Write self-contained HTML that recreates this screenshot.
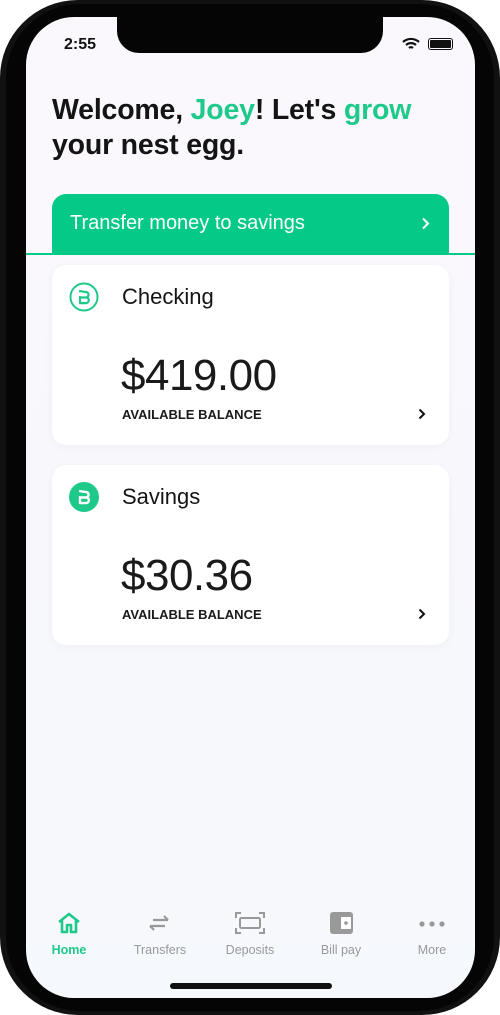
<!DOCTYPE html>
<html><head><meta charset="utf-8"><style>
*{margin:0;padding:0;box-sizing:border-box}
body{width:500px;height:1015px;background:#fff;font-family:"Liberation Sans",sans-serif;position:relative;overflow:hidden}
.phone{position:absolute;left:0;top:0;width:500px;height:1015px;background:#111;border-radius:78px}
.phone2{position:absolute;left:6px;top:4px;width:488px;height:1007px;background:#050505;border-radius:74px}
.screen{position:absolute;left:26px;top:17px;width:449px;height:981px;border-radius:48px;background:linear-gradient(#fbf8fd,#f5f8fc);overflow:hidden}
.notch{position:absolute;left:91px;top:0;width:266px;height:36px;background:#050505;border-radius:0 0 22px 22px}
.abs{position:absolute}
.h1{left:26px;top:76px;font-size:28.5px;font-weight:bold;line-height:35px;color:#141414;letter-spacing:-0.2px}
.g{color:#1ec98a}
.banner{left:26px;top:177px;width:397px;height:60px;background:#04c987;border-radius:14px 14px 0 0;color:#fff;font-size:20px;padding:18px 0 0 18px}
.line{left:0;top:236px;width:449px;height:2px;background:#04c987}
.card{left:26px;width:397px;height:180px;background:#fff;border-radius:14px;box-shadow:0 2px 10px rgba(0,0,0,0.04)}
.title{position:absolute;left:70px;top:19px;font-size:22px;color:#141414}
.amt{position:absolute;left:69px;top:86px;font-size:44px;color:#1a1a1a;letter-spacing:-0.5px}
.lbl{position:absolute;left:70px;top:142px;font-size:13px;font-weight:bold;color:#1a1a1a}
.chev{position:absolute;left:366px;top:143px}
.nav{top:893px;width:90px;text-align:center;font-size:12.5px;color:#999}
</style></head><body>
<div class="phone"></div><div class="phone2"></div>
<div class="screen">
<div class="notch"></div>
<div class="abs" style="left:38px;top:19px;font-size:16px;font-weight:bold;color:#111">2:55</div>
<svg class="abs" style="left:376px;top:20px" width="18" height="14" viewBox="0 0 18 14"><path d="M1 5a12 12 0 0 1 16 0M4 8a7.5 7.5 0 0 1 10 0M7 11a3 3 0 0 1 4 0" stroke="#111" stroke-width="2.2" fill="none"/></svg>
<div class="abs" style="left:402px;top:21px;width:25px;height:12px;border:1.5px solid #111;border-radius:3px;padding:1px"><div style="width:100%;height:100%;background:#111;border-radius:1px"></div></div>
<div class="abs h1">Welcome, <span class="g">Joey</span>! Let's <span class="g">grow</span><br>your nest egg.</div>
<div class="abs banner">Transfer money to savings
<svg class="abs" style="left:369px;top:23px" width="9" height="13" viewBox="0 0 9 13"><path d="M2 1.5l5 5-5 5" stroke="#fff" stroke-width="2" fill="none"/></svg></div>
<div class="abs line"></div>
<div class="abs card" style="top:248px">
<svg class="abs" style="left:17px;top:17px" width="30" height="30" viewBox="0 0 30 30"><circle cx="15" cy="15" r="13.5" stroke="#1ec98a" stroke-width="2" fill="none"/><path d="M10 9l8 1.2a2.8 2.8 0 0 1-1 5.3h-5M12 15.5h5a2.8 2.8 0 0 1 0 5.6h-6v-7" stroke="#1ec98a" stroke-width="2.2" fill="none" stroke-linejoin="round"/></svg>
<div class="title">Checking</div><div class="amt">$419.00</div><div class="lbl">AVAILABLE BALANCE</div>
<svg class="chev" width="8" height="12" viewBox="0 0 8 12"><path d="M1.5 1.5l4.5 4.5-4.5 4.5" stroke="#111" stroke-width="2" fill="none"/></svg>
</div>
<div class="abs card" style="top:448px">
<svg class="abs" style="left:17px;top:17px" width="30" height="30" viewBox="0 0 30 30"><circle cx="15" cy="15" r="15" fill="#1ec98a"/><path d="M10 9l8 1.2a2.8 2.8 0 0 1-1 5.3h-5M12 15.5h5a2.8 2.8 0 0 1 0 5.6h-6v-7" stroke="#fff" stroke-width="2.4" fill="none" stroke-linejoin="round"/></svg>
<div class="title">Savings</div><div class="amt">$30.36</div><div class="lbl">AVAILABLE BALANCE</div>
<svg class="chev" width="8" height="12" viewBox="0 0 8 12"><path d="M1.5 1.5l4.5 4.5-4.5 4.5" stroke="#111" stroke-width="2" fill="none"/></svg>
</div>
<svg class="abs" style="left:31px;top:895px" width="24" height="22" viewBox="0 0 24 22"><path d="M2 10L12 2l10 8M5 8v12h5v-7h4v7h5V8" stroke="#1ec98a" stroke-width="2.6" fill="none" stroke-linejoin="round"/></svg>
<svg class="abs" style="left:122px;top:897px" width="22" height="18" viewBox="0 0 22 18"><path d="M5 6h15M16 2l4 4M17 12H2M6 16l-4-4" stroke="#999" stroke-width="2.2" fill="none"/></svg>
<svg class="abs" style="left:209px;top:895px" width="30" height="22" viewBox="0 0 30 22"><path d="M1 6V1h5M24 1h5v5M29 16v5h-5M6 21H1v-5" stroke="#999" stroke-width="2" fill="none"/><rect x="5" y="6" width="20" height="10" rx="1.5" stroke="#999" stroke-width="2" fill="none"/></svg>
<svg class="abs" style="left:304px;top:895px" width="24" height="22" viewBox="0 0 24 22"><rect x="0" y="0" width="23" height="22" rx="3" fill="#999"/><rect x="11" y="5" width="10" height="12" fill="#fff"/><circle cx="16" cy="11" r="1.8" fill="#999"/></svg>
<svg class="abs" style="left:393px;top:904px" width="26" height="6" viewBox="0 0 26 6"><circle cx="3" cy="3" r="2.6" fill="#999"/><circle cx="13" cy="3" r="2.6" fill="#999"/><circle cx="23" cy="3" r="2.6" fill="#999"/></svg>
<div class="abs nav" style="left:-2px;top:926px;color:#1ec98a;font-weight:bold">Home</div>
<div class="abs nav" style="left:89px;top:926px">Transfers</div>
<div class="abs nav" style="left:179px;top:926px">Deposits</div>
<div class="abs nav" style="left:270px;top:926px">Bill pay</div>
<div class="abs nav" style="left:361px;top:926px">More</div>
<div class="abs" style="left:144px;top:966px;width:162px;height:6px;background:#111;border-radius:3px"></div>
</div>
</body></html>
